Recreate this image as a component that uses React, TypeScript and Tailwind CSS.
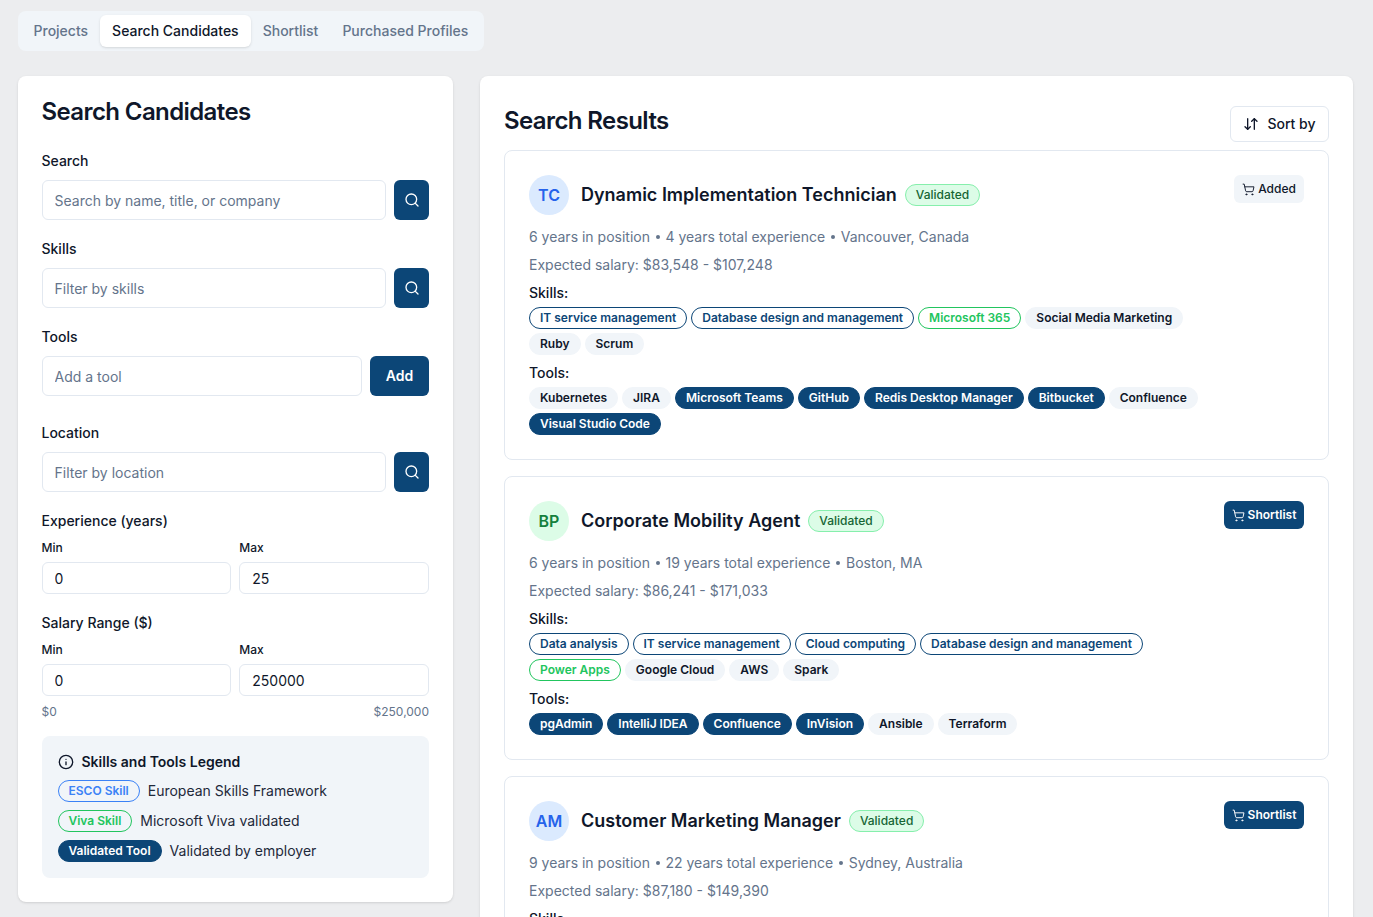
import React from "react";
import { ArrowDownUp, Info, Search, ShoppingCart } from "lucide-react";

type TagKind = "esco" | "viva" | "tool" | "plain";
type TagDef = [string, TagKind];

const tagStyles: Record<TagKind, string> = {
  esco: "border-[#0c4677] text-[#0c4677] bg-white",
  viva: "border-[#22c55e] text-[#22c55e] bg-white",
  tool: "border-[#0c4677] bg-[#0c4677] text-white",
  plain: "border-[#f1f5f9] bg-[#f1f5f9] text-[#0f172a]",
};

const candidates: {
  initials: string;
  avatar: string;
  name: string;
  meta: string[];
  salary: string;
  added?: boolean;
  skills: TagDef[];
  tools: TagDef[];
}[] = [
  {
    initials: "TC",
    avatar: "bg-[#dbeafe] text-[#2563eb]",
    name: "Dynamic Implementation Technician",
    meta: ["6 years in position", "4 years total experience", "Vancouver, Canada"],
    salary: "Expected salary: $83,548 - $107,248",
    added: true,
    skills: [
      ["IT service management", "esco"],
      ["Database design and management", "esco"],
      ["Microsoft 365", "viva"],
      ["Social Media Marketing", "plain"],
      ["Ruby", "plain"],
      ["Scrum", "plain"],
    ],
    tools: [
      ["Kubernetes", "plain"],
      ["JIRA", "plain"],
      ["Microsoft Teams", "tool"],
      ["GitHub", "tool"],
      ["Redis Desktop Manager", "tool"],
      ["Bitbucket", "tool"],
      ["Confluence", "plain"],
      ["Visual Studio Code", "tool"],
    ],
  },
  {
    initials: "BP",
    avatar: "bg-[#dcfce7] text-[#15803d]",
    name: "Corporate Mobility Agent",
    meta: ["6 years in position", "19 years total experience", "Boston, MA"],
    salary: "Expected salary: $86,241 - $171,033",
    skills: [
      ["Data analysis", "esco"],
      ["IT service management", "esco"],
      ["Cloud computing", "esco"],
      ["Database design and management", "esco"],
      ["Power Apps", "viva"],
      ["Google Cloud", "plain"],
      ["AWS", "plain"],
      ["Spark", "plain"],
    ],
    tools: [
      ["pgAdmin", "tool"],
      ["IntelliJ IDEA", "tool"],
      ["Confluence", "tool"],
      ["InVision", "tool"],
      ["Ansible", "plain"],
      ["Terraform", "plain"],
    ],
  },
  {
    initials: "AM",
    avatar: "bg-[#dbeafe] text-[#2563eb]",
    name: "Customer Marketing Manager",
    meta: ["9 years in position", "22 years total experience", "Sydney, Australia"],
    salary: "Expected salary: $87,180 - $149,390",
    skills: [],
    tools: [],
  },
];

const Tag = ({ label, kind, className = "" }: { label: string; kind: TagKind; className?: string }) => (
  <span
    className={`inline-flex h-[22px] items-center rounded-full border px-2.5 text-xs font-semibold ${tagStyles[kind]} ${className}`}
  >
    {label}
  </span>
);

const TextField = ({ placeholder, value, className = "h-10" }: { placeholder?: string; value?: string; className?: string }) => (
  <input
    readOnly
    placeholder={placeholder}
    value={value}
    className={`w-full min-w-0 flex-1 rounded-md border border-[#e2e8f0] bg-white px-3 text-sm text-[#0f172a] placeholder:text-[#64748b] ${className}`}
  />
);

const SearchField = ({ placeholder }: { placeholder: string }) => (
  <div className="flex gap-2">
    <TextField placeholder={placeholder} />
    <button className="flex h-10 w-[35px] shrink-0 items-center justify-center rounded-md bg-[#0c4677] text-white">
      <Search size={16} />
    </button>
  </div>
);

const FieldLabel = ({ children }: { children: React.ReactNode }) => (
  <label className="block text-sm font-medium leading-5 text-[#0f172a]">{children}</label>
);

const RangeInputs = ({ max }: { max: string }) => (
  <div className="mt-[9px] grid grid-cols-2 gap-2">
    <div>
      <div className="text-xs font-medium leading-4 text-[#0f172a]">Min</div>
      <TextField value="0" className="mt-1.5 h-8 w-full" />
    </div>
    <div>
      <div className="text-xs font-medium leading-4 text-[#0f172a]">Max</div>
      <TextField value={max} className="mt-1.5 h-8 w-full" />
    </div>
  </div>
);

const FilterPanel = () => (
  <aside className="w-[435.5px] shrink-0 self-start rounded-lg bg-white p-6 pt-5 shadow-sm">
    <h2 className="text-2xl font-semibold leading-[32px] tracking-tight text-[#0f172a]">Search Candidates</h2>
    <div className="mt-[23px]">
      <FieldLabel>Search</FieldLabel>
      <div className="mt-[9px]">
        <SearchField placeholder="Search by name, title, or company" />
      </div>
    </div>
    <div className="mt-[19px]">
      <FieldLabel>Skills</FieldLabel>
      <div className="mt-[9px]">
        <SearchField placeholder="Filter by skills" />
      </div>
    </div>
    <div className="mt-[19px]">
      <FieldLabel>Tools</FieldLabel>
      <div className="mt-[9px] flex gap-2">
        <TextField placeholder="Add a tool" />
        <button className="h-10 w-[59px] shrink-0 rounded-md bg-[#0c4677] text-sm font-semibold text-white">Add</button>
      </div>
    </div>
    <div className="mt-[27px]">
      <FieldLabel>Location</FieldLabel>
      <div className="mt-[9px]">
        <SearchField placeholder="Filter by location" />
      </div>
    </div>
    <div className="mt-[19px]">
      <FieldLabel>Experience (years)</FieldLabel>
      <RangeInputs max="25" />
    </div>
    <div className="mt-[19px]">
      <FieldLabel>Salary Range ($)</FieldLabel>
      <RangeInputs max="250000" />
      <div className="mt-2 flex justify-between text-xs leading-4 text-[#64748b]">
        <span>$0</span>
        <span>$250,000</span>
      </div>
    </div>
    <div className="mt-4 rounded-lg bg-[#f1f5f9] p-4">
      <div className="flex items-center gap-2 text-sm font-semibold leading-5 text-[#0f172a]">
        <Info size={16} />
        Skills and Tools Legend
      </div>
      <div className="mt-2 flex flex-col gap-2 text-sm text-[#1e293b]">
        <div className="flex items-center gap-2">
          <Tag label="ESCO Skill" kind="esco" className="!border-[#3b82f6] !bg-transparent !text-[#3b82f6]" />
          European Skills Framework
        </div>
        <div className="flex items-center gap-2">
          <Tag label="Viva Skill" kind="viva" className="!bg-transparent" />
          Microsoft Viva validated
        </div>
        <div className="flex items-center gap-2">
          <Tag label="Validated Tool" kind="tool" />
          Validated by employer
        </div>
      </div>
    </div>
  </aside>
);

const TagGroup = ({ title, tags }: { title: string; tags: TagDef[] }) => (
  <div className="mt-2">
    <div className="text-sm font-medium leading-5 text-[#0f172a]">{title}</div>
    {tags.length > 0 && (
      <div className="mt-1 flex max-w-[690px] flex-wrap gap-1">
        {tags.map(([label, kind]) => (
          <Tag key={label} label={label} kind={kind} />
        ))}
      </div>
    )}
  </div>
);

const CandidateCard = ({ candidate }: { candidate: (typeof candidates)[number] }) => (
  <div className="rounded-lg border border-[#e2e8f0] bg-white p-6">
    <div className="flex items-start justify-between">
      <div className="flex items-center gap-3">
        <div className={`flex h-10 w-10 items-center justify-center rounded-full text-base font-semibold ${candidate.avatar}`}>
          {candidate.initials}
        </div>
        <h3 className="text-lg font-semibold leading-7 text-[#0f172a]">{candidate.name}</h3>
        <span className="-ml-1 inline-flex h-[22px] items-center rounded-full border border-[#86efac] bg-[#dcfce7] px-2.5 text-xs font-medium text-[#166534]">
          Validated
        </span>
      </div>
      {candidate.added ? (
        <button className="flex h-7 w-[70px] items-center justify-center gap-[3px] rounded-md bg-[#f1f5f9] text-xs font-medium text-[#0f172a]">
          <ShoppingCart size={13} strokeWidth={1.75} />
          Added
        </button>
      ) : (
        <button className="flex h-7 w-20 items-center justify-center gap-[3px] rounded-md bg-[#0c4677] text-xs font-semibold text-white">
          <ShoppingCart size={13} strokeWidth={1.75} />
          Shortlist
        </button>
      )}
    </div>
    <div className="mt-3 flex items-center gap-[5.75px] text-sm leading-5 text-[#64748b]">
      {candidate.meta.map((part, i) => (
        <React.Fragment key={part}>
          {i > 0 && <span className="h-1 w-1 rounded-full bg-[#64748b]" />}
          <span>{part}</span>
        </React.Fragment>
      ))}
    </div>
    <div className="mt-2 text-sm leading-5 text-[#64748b]">{candidate.salary}</div>
    <TagGroup title="Skills:" tags={candidate.skills} />
    {candidate.tools.length > 0 && <TagGroup title="Tools:" tags={candidate.tools} />}
  </div>
);

export default function App() {
  return (
    <div className="h-screen overflow-hidden bg-[#ecedef] pl-[17.5px] pr-5 pt-[11px] font-['Inter',sans-serif]">
      <div className="inline-flex h-10 items-center rounded-lg bg-[#f1f5f9] p-1 text-sm font-medium text-[#64748b]">
        <span className="px-3">Projects</span>
        <span className="flex h-8 items-center rounded-md bg-white px-3 text-[#0f172a] shadow-sm">Search Candidates</span>
        <span className="px-3">Shortlist</span>
        <span className="px-3">Purchased Profiles</span>
      </div>
      <div className="mt-[25px] flex items-start gap-[27px]">
        <FilterPanel />
        <main className="min-w-0 flex-1 rounded-lg bg-white p-6 pt-[30px] shadow-sm">
          <div className="flex h-9 items-start justify-between">
            <h2 className="text-2xl font-semibold leading-[30px] tracking-tight text-[#0f172a]">Search Results</h2>
            <button className="flex h-9 w-[99px] items-center justify-center gap-2 rounded-md border border-[#e2e8f0] bg-white text-sm font-medium text-[#0f172a]">
              <ArrowDownUp size={16} />
              Sort by
            </button>
          </div>
          <div className="mt-2 flex flex-col gap-4">
            {candidates.map((c) => (
              <CandidateCard key={c.initials} candidate={c} />
            ))}
          </div>
        </main>
      </div>
    </div>
  );
}
